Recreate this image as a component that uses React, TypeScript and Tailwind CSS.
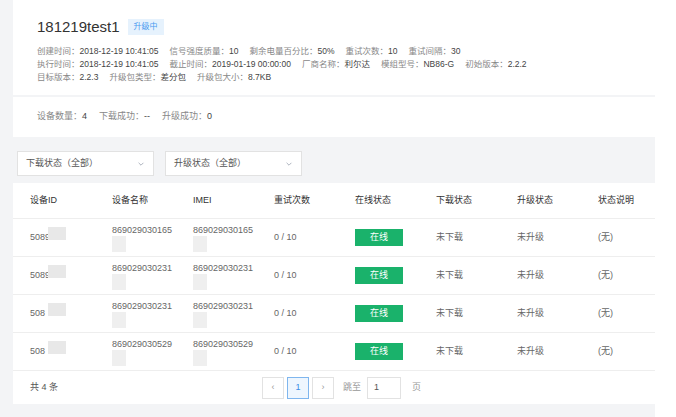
import React from "react";

const rows = [
  ["5089", "869029030165", "869029030165"],
  ["5089", "869029030231", "869029030231"],
  ["508", "869029030231", "869029030231"],
  ["508", "869029030529", "869029030529"],
];

function Chevron() {
  return (
    <svg width="8" height="8" viewBox="0 0 10 10" className="text-gray-400">
      <path d="M2 3.5 L5 6.5 L8 3.5" fill="none" stroke="currentColor" strokeWidth="1" />
    </svg>
  );
}

export default function App() {
  const f = { fontFamily: '"Liberation Sans", "Noto Sans CJK SC", sans-serif' };
  return (
    <div style={f} className="w-[676px] h-[417px] bg-[#f3f4f6] overflow-hidden flex text-[9px] text-[#555]">
      <div className="w-[13px] shrink-0" />
      <div className="w-[642px] flex flex-col">
        <div className="bg-white h-[95px] pl-[24px] pt-[16px]">
          <div className="flex items-center gap-[8px]">
            <span className="text-[15px] text-[#333]">181219test1</span>
            <span className="bg-[#e6f2fd] text-[#4a9bf0] text-[8px] px-[6px] py-[2px]">升级中</span>
          </div>
          <div className="mt-[6px] leading-[13px] text-[#888] text-[8.5px]">
            <div className="flex gap-[11px]">
              <span>创建时间：<b className="font-normal text-[#444]">2018-12-19 10:41:05</b></span>
              <span>信号强度质量：<b className="font-normal text-[#444]">10</b></span>
              <span>剩余电量百分比：<b className="font-normal text-[#444]">50%</b></span>
              <span>重试次数：<b className="font-normal text-[#444]">10</b></span>
              <span>重试间隔：<b className="font-normal text-[#444]">30</b></span>
            </div>
            <div className="flex gap-[11px]">
              <span>执行时间：<b className="font-normal text-[#444]">2018-12-19 10:41:05</b></span>
              <span>截止时间：<b className="font-normal text-[#444]">2019-01-19 00:00:00</b></span>
              <span>厂商名称：<b className="font-normal text-[#444]">利尔达</b></span>
              <span>模组型号：<b className="font-normal text-[#444]">NB86-G</b></span>
              <span>初始版本：<b className="font-normal text-[#444]">2.2.2</b></span>
            </div>
            <div className="flex gap-[11px]">
              <span>目标版本：<b className="font-normal text-[#444]">2.2.3</b></span>
              <span>升级包类型：<b className="font-normal text-[#444]">差分包</b></span>
              <span>升级包大小：<b className="font-normal text-[#444]">8.7KB</b></span>
            </div>
          </div>
        </div>
        <div className="bg-white mt-[2px] h-[40px] pl-[24px] flex items-center gap-[12px] text-[#888]">
          <span>设备数量：<b className="font-normal text-[#444]">4</b></span>
          <span>下载成功：<b className="font-normal text-[#444]">--</b></span>
          <span>升级成功：<b className="font-normal text-[#444]">0</b></span>
        </div>
        <div className="flex gap-[11px] mt-[14px] ml-[4px]">
          {["下载状态（全部）", "升级状态（全部）"].map((t) => (
            <div key={t} className="w-[137px] h-[25px] bg-white border border-[#e2e2e2] flex items-center justify-between px-[8px] text-[#555]">
              <span>{t}</span>
              <Chevron />
            </div>
          ))}
        </div>
        <div className="bg-white mt-[7px] h-[221px] flex flex-col">
          <div className="grid grid-cols-[82px_81px_81px_81px_81px_81px_81px_70px] pl-[17px] h-[35px] items-center text-[#333]">
            {["设备ID", "设备名称", "IMEI", "重试次数", "在线状态", "下载状态", "升级状态", "状态说明"].map((h) => (
              <span key={h}>{h}</span>
            ))}
          </div>
          {rows.map((r, i) => (
            <div key={i} className="grid grid-cols-[82px_81px_81px_81px_81px_81px_81px_70px] pl-[17px] h-[38px] items-center border-t border-[#eee] text-[#666]">
              <span className="relative">
                {r[0]}
                <span className="absolute left-[18px] top-[-4px] w-[18px] h-[13px] bg-[#e8e8e8]" />
              </span>
              <span className="relative self-start pt-[5px]">
                {r[1]}
                <span className="absolute left-0 top-[17px] w-[14px] h-[16px] bg-[#efefef]" />
              </span>
              <span className="relative self-start pt-[5px]">
                {r[2]}
                <span className="absolute left-0 top-[17px] w-[14px] h-[16px] bg-[#efefef]" />
              </span>
              <span>0 / 10</span>
              <span>
                <span className="inline-flex w-[48px] h-[17px] bg-[#1ab26b] text-white items-center justify-center">在线</span>
              </span>
              <span>未下载</span>
              <span>未升级</span>
              <span>(无)</span>
            </div>
          ))}
          <div className="border-t border-[#eee] flex-1 flex items-center pl-[17px] relative">
            <span className="text-[#555]">共 4 条</span>
            <div className="absolute left-[249px] flex items-center gap-[3px] text-[#999]">
              <span className="w-[22px] h-[22px] border border-[#e2e2e2] flex items-center justify-center">‹</span>
              <span className="w-[22px] h-[22px] border border-[#7fb6ee] bg-[#eef6fe] text-[#3a8ee6] flex items-center justify-center">1</span>
              <span className="w-[22px] h-[22px] border border-[#e2e2e2] flex items-center justify-center">›</span>
              <span className="ml-[6px]">跳至</span>
              <span className="w-[34px] h-[22px] border border-[#e2e2e2] flex items-center pl-[6px] text-[#555] ml-[3px]">1</span>
              <span className="ml-[8px]">页</span>
            </div>
          </div>
        </div>
      </div>
      <div className="flex-1 bg-white" />
    </div>
  );
}
